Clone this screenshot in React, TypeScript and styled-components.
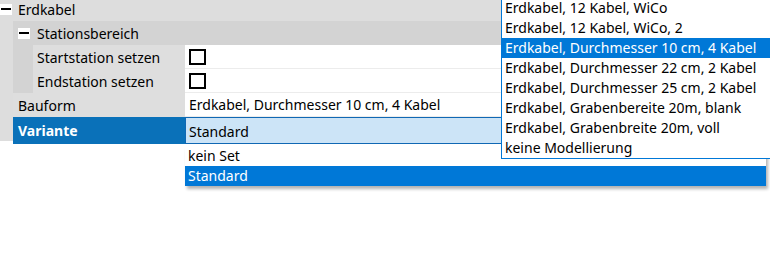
import React from 'react';
import styled, { createGlobalStyle } from 'styled-components';

const GlobalStyle = createGlobalStyle`
  html, body {
    margin: 0;
    padding: 0;
    background: #fff;
  }
`;

const Page = styled.div`
  position: relative;
  width: 770px;
  height: 260px;
  overflow: hidden;
  background: #fff;
  font-family: "Noto Sans", "Open Sans", sans-serif;
  font-size: 14px;
  color: #000;
`;

const Grid = styled.div`
  display: flex;
  flex-direction: column;
  margin-top: -3px;
`;

const CategoryRow = styled.div<{ $nested?: boolean }>`
  display: flex;
  align-items: center;
  gap: ${({ $nested }) => ($nested ? '7px' : '6px')};
  height: 24px;
  padding-left: ${({ $nested }) => ($nested ? '5px' : '0')};
  background: ${({ $nested }) => ($nested ? '#d3d3d3' : '#dddddd')};
  white-space: nowrap;
`;

const Expander = styled.span`
  position: relative;
  flex: none;
  width: 12px;
  height: 11px;
  background: #fff;

  &::after {
    content: '';
    position: absolute;
    left: 1px;
    right: 1px;
    top: 4px;
    height: 2px;
    background: #000;
  }
`;

const Nested = styled.div`
  display: flex;
`;

const Gutter = styled.div`
  flex: none;
  width: 13px;
  background: #dddddd;
`;

const Column = styled.div`
  flex: 1;
  display: flex;
  flex-direction: column;
`;

const PropertyRow = styled.div`
  display: grid;
  grid-template-columns: 172px 1fr;
  height: 24px;
`;

const Label = styled.div<{ $indent?: boolean; $selected?: boolean }>`
  display: flex;
  align-items: center;
  padding-left: ${({ $indent }) => ($indent ? '4px' : '5px')};
  border-left: ${({ $indent }) => ($indent ? '20px solid #d3d3d3' : '0')};
  background: ${({ $selected }) => ($selected ? '#0a71b9' : '#dedede')};
  color: ${({ $selected }) => ($selected ? '#fff' : '#000')};
  font-weight: ${({ $selected }) => ($selected ? 700 : 400)};
  white-space: nowrap;
`;

const Value = styled.div<{ $editing?: boolean }>`
  display: flex;
  align-items: center;
  padding-left: ${({ $editing }) => ($editing ? '0' : '4px')};
  padding-right: ${({ $editing }) => ($editing ? '4px' : '0')};
  border-bottom: ${({ $editing }) => ($editing ? '0' : '1px solid #ececec')};
  align-self: ${({ $editing }) => ($editing ? 'start' : 'stretch')};
  background: #fff;
  white-space: nowrap;
`;

const Checkbox = styled.span`
  width: 17px;
  height: 16px;
  box-sizing: border-box;
  border: 2px solid #000;
  background: #fff;
`;

const Combo = styled.div`
  position: relative;
  flex: 1;
  display: flex;
  align-items: center;
  height: 27px;
  box-sizing: border-box;
  padding: 1px 0 0 3px;
  border: 1px solid #1068b4;
  background: #cce4f7;
`;

const DropDown = styled.div`
  position: absolute;
  top: 27px;
  left: -1px;
  right: -1px;
  margin-top: 1px;
  background: #fff;
  box-shadow: 2px 3px 3px rgba(0, 0, 0, 0.3);
`;

const Option = styled.div<{ $active?: boolean }>`
  height: 20px;
  line-height: 20px;
  padding-left: 3px;
  background: ${({ $active }) => ($active ? '#0078d7' : '#fff')};
  color: ${({ $active }) => ($active ? '#fff' : '#000')};
  white-space: nowrap;
`;

const ListPopup = styled.div`
  position: absolute;
  top: -3px;
  left: 501px;
  width: 272px;
  border: 1px solid #0078d7;
  background: #fff;
`;

const ListItem = styled(Option)`
  padding-left: 3px;
`;

const bauformen = [
  'Erdkabel, 12 Kabel, WiCo',
  'Erdkabel, 12 Kabel, WiCo, 2',
  'Erdkabel, Durchmesser 10 cm, 4 Kabel',
  'Erdkabel, Durchmesser 22 cm, 2 Kabel',
  'Erdkabel, Durchmesser 25 cm, 2 Kabel',
  'Erdkabel, Grabenbereite 20m, blank',
  'Erdkabel, Grabenbreite 20m, voll',
  'keine Modellierung',
];

const varianten = ['kein Set', 'Standard'];

const App = () => {
  const bauform = bauformen[2];
  const variante = 'Standard';

  return (
    <Page>
      <GlobalStyle />
      <Grid>
        <CategoryRow>
          <Expander />
          Erdkabel
        </CategoryRow>
        <Nested>
          <Gutter />
          <Column>
            <CategoryRow $nested>
              <Expander />
              Stationsbereich
            </CategoryRow>
            <PropertyRow>
              <Label $indent>Startstation setzen</Label>
              <Value><Checkbox /></Value>
            </PropertyRow>
            <PropertyRow>
              <Label $indent>Endstation setzen</Label>
              <Value><Checkbox /></Value>
            </PropertyRow>
            <PropertyRow>
              <Label>Bauform</Label>
              <Value>{bauform}</Value>
            </PropertyRow>
            <PropertyRow>
              <Label $selected>Variante</Label>
              <Value $editing>
                <Combo>
                  {variante}
                  <DropDown>
                    {varianten.map((v) => (
                      <Option key={v} $active={v === variante}>{v}</Option>
                    ))}
                  </DropDown>
                </Combo>
              </Value>
            </PropertyRow>
          </Column>
        </Nested>
      </Grid>
      <ListPopup>
        {bauformen.map((b) => (
          <ListItem key={b} $active={b === bauform}>{b}</ListItem>
        ))}
      </ListPopup>
    </Page>
  );
};

export default App;
